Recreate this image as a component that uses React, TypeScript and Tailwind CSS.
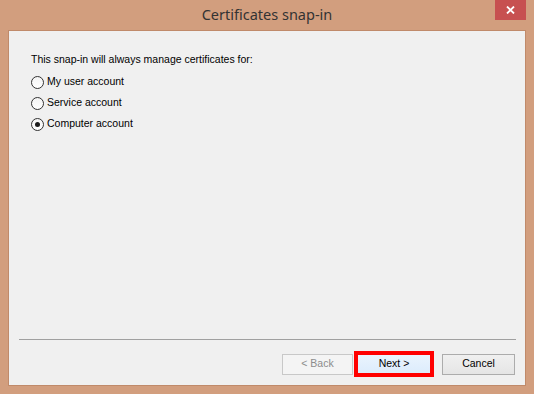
import { useState } from 'react';

const options = ['My user account', 'Service account', 'Computer account'];

const Radio = ({ checked }: { checked: boolean }) => (
  <span className="flex h-[13px] w-[13px] items-center justify-center rounded-full border border-[#333333] bg-gradient-to-b from-[#f4f4f4] to-white">
    {checked && <span className="h-[5px] w-[5px] rounded-full bg-[#1a1a1a]" />}
  </span>
);

const App = () => {
  const [selected, setSelected] = useState(2);

  return (
    <div className="flex h-[394px] w-[534px] flex-col bg-[#d29e7e] font-['Liberation_Sans',Arial,sans-serif] text-[10.5px] text-black">
      <div className="grid h-[30px] grid-cols-[1fr_auto_1fr]">
        <div />
        <div className="pt-[4px] font-['Noto_Sans',sans-serif] text-[14.5px] leading-[20px] text-[#333333]">
          Certificates snap-in
        </div>
        <div className="flex justify-end pr-[8px]">
          <button className="flex h-[20px] w-[31px] items-center justify-center bg-[#c75050]">
            <svg width="9" height="8" viewBox="0 0 9 8">
              <path d="M1 0.5 L8 7.5 M8 0.5 L1 7.5" stroke="white" strokeWidth="1.8" />
            </svg>
          </button>
        </div>
      </div>

      <div className="mx-[8px] mb-[8px] flex flex-1 flex-col border border-[#c08a6a] bg-[#f0f0f0]">
        <div className="px-[22px] pt-[22px]">
          <p className="leading-[13px]">This snap-in will always manage certificates for:</p>
          <div className="mt-[9px] flex flex-col gap-[7px]">
            {options.map((label, i) => (
              <label
                key={label}
                className="flex h-[14px] cursor-default items-center gap-[3px]"
                onClick={() => setSelected(i)}
              >
                <Radio checked={selected === i} />
                <span>{label}</span>
              </label>
            ))}
          </div>
        </div>

        <div className="flex-1" />

        <div className="ml-[10px] mr-[9px] h-px bg-[#a0a0a0]" />

        <div className="mt-[11px] flex items-center justify-end pb-[8px] pr-[10px]">
          <button
            disabled
            className="flex h-[21px] w-[71px] items-center justify-center border border-[#c8c8c8] bg-[#f4f4f4] text-[#8c8c8c]"
          >
            &lt; Back
          </button>
          <div className="ml-[1px] h-[26px] w-[80px] border-[4px] border-[#ff0000]">
            <button className="flex h-full w-full items-center justify-center bg-gradient-to-b from-[#eaf4fd] to-[#dcecfc] text-black">
              Next &gt;
            </button>
          </div>
          <button className="ml-[8px] flex h-[21px] w-[73px] items-center justify-center border border-[#acacac] bg-gradient-to-b from-[#f0f0f0] to-[#e5e5e5]">
            Cancel
          </button>
        </div>
      </div>
    </div>
  );
};

export default App;
